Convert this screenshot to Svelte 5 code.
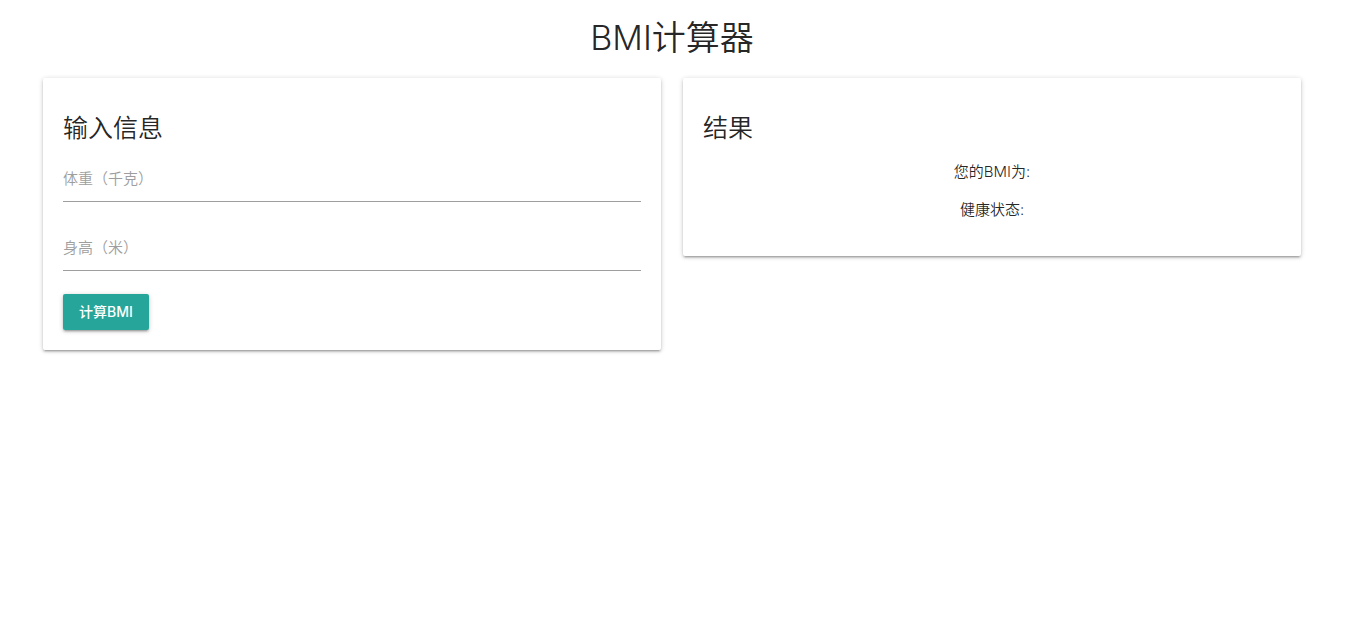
<script>
  let weight = $state('');
  let height = $state('');
  let bmi = $state('');
  let status = $state('');

  function calculate(event) {
    event.preventDefault();
    const kg = parseFloat(weight);
    const m = parseFloat(height);
    if (!(kg > 0 && m > 0)) return;
    const value = kg / (m * m);
    bmi = value.toFixed(2);
    status = value < 18.5 ? '偏瘦' : value < 24 ? '正常' : value < 28 ? '超重' : '肥胖';
  }
</script>

<main>
  <h1>BMI计算器</h1>
  <div class="columns">
    <form class="card" onsubmit={calculate}>
      <h2>输入信息</h2>
      <div class="field">
        <input id="weight" inputmode="decimal" placeholder=" " bind:value={weight} />
        <label for="weight">体重（千克）</label>
      </div>
      <div class="field">
        <input id="height" inputmode="decimal" placeholder=" " bind:value={height} />
        <label for="height">身高（米）</label>
      </div>
      <button type="submit">计算BMI</button>
    </form>
    <section class="card">
      <h2>结果</h2>
      <p>您的BMI为: {bmi}</p>
      <p>健康状态: {status}</p>
    </section>
  </div>
</main>

<style>
  :global(body) {
    padding-right: 3px;
    background: #fff;
  }

  main {
    box-sizing: border-box;
    max-width: 1278px;
    margin: 0 auto;
    padding: 0 10px 20px;
    color: rgba(0, 0, 0, 0.87);
    font: 350 15px/24px Inter, "Noto Sans CJK SC", sans-serif;
  }

  h1,
  h2 {
    font-weight: 350;
  }

  h1 {
    margin: 0;
    padding: 16px 0 18px;
    font-size: 34px;
    line-height: 44px;
    text-align: center;
  }

  .columns {
    display: grid;
    grid-template-columns: 1fr 1fr;
    align-items: start;
    gap: 22px;
  }

  .card {
    padding: 20px;
    border-radius: 2px;
    background: #fff;
    box-shadow:
      0 2px 2px 0 rgba(0, 0, 0, 0.14),
      0 3px 1px -2px rgba(0, 0, 0, 0.12),
      0 1px 5px 0 rgba(0, 0, 0, 0.2);
  }

  h2 {
    margin: 12px 0 10px;
    font-size: 25px;
    line-height: 36px;
  }

  .field {
    position: relative;
    margin-bottom: 23px;
  }

  input {
    display: block;
    box-sizing: border-box;
    width: 100%;
    height: 46px;
    padding: 0;
    border: 0;
    border-bottom: 1px solid #9e9e9e;
    outline: none;
    background: transparent;
    font: inherit;
  }

  input:focus {
    border-color: #26a69a;
  }

  label {
    position: absolute;
    top: 11px;
    left: 0;
    color: #9e9e9e;
    cursor: text;
  }

  input:focus + label,
  input:not(:placeholder-shown) + label {
    top: -8px;
    font-size: 12px;
  }

  button {
    display: block;
    height: 36px;
    padding: 0 16px;
    border: 0;
    border-radius: 2px;
    background: #26a69a;
    color: #fff;
    font: 500 14px/36px "Noto Sans", "Noto Sans CJK SC", sans-serif;
    font-family: Inter, "Noto Sans CJK SC", sans-serif;
    cursor: pointer;
    box-shadow:
      0 2px 2px 0 rgba(0, 0, 0, 0.14),
      0 3px 1px -2px rgba(0, 0, 0, 0.12),
      0 1px 5px 0 rgba(0, 0, 0, 0.2);
  }

  p {
    margin: 0 0 14px;
    text-align: center;
  }

  h2 + p {
    margin-top: 14px;
  }

  @media (max-width: 600px) {
    .columns {
      grid-template-columns: 1fr;
    }
  }
</style>
